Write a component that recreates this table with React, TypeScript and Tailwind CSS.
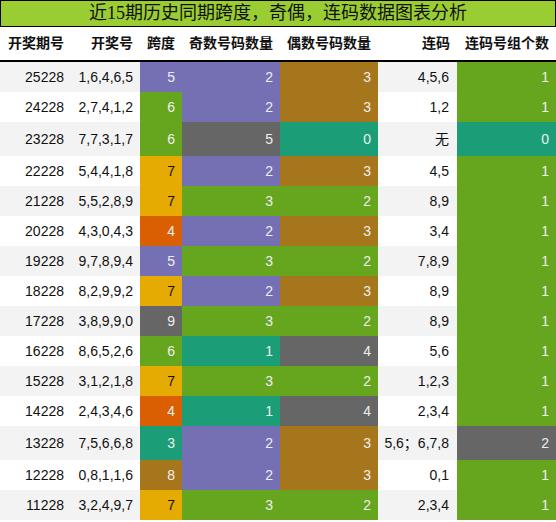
import React from "react";

// Dark2 palette used by the chart cells
const C: Record<string, string> = {
  purple: "bg-[#7570b3]",
  green: "bg-[#66a61e]",
  brown: "bg-[#a6761d]",
  teal: "bg-[#1b9e77]",
  gray: "bg-[#666666]",
  yellow: "bg-[#e6ab02]",
  orange: "bg-[#d95f02]",
};

type Cell = [number, string];

const rows: {
  qh: string;
  hm: string;
  kd: Cell;
  ji: Cell;
  ou: Cell;
  lm: string;
  gs: Cell;
  tall?: boolean;
}[] = [
  { qh: "25228", hm: "1,6,4,6,5", kd: [5, "purple"], ji: [2, "purple"], ou: [3, "brown"], lm: "4,5,6", gs: [1, "green"] },
  { qh: "24228", hm: "2,7,4,1,2", kd: [6, "green"], ji: [2, "purple"], ou: [3, "brown"], lm: "1,2", gs: [1, "green"] },
  { qh: "23228", hm: "7,7,3,1,7", kd: [6, "green"], ji: [5, "gray"], ou: [0, "teal"], lm: "无", gs: [0, "teal"], tall: true },
  { qh: "22228", hm: "5,4,4,1,8", kd: [7, "yellow"], ji: [2, "purple"], ou: [3, "brown"], lm: "4,5", gs: [1, "green"] },
  { qh: "21228", hm: "5,5,2,8,9", kd: [7, "yellow"], ji: [3, "green"], ou: [2, "green"], lm: "8,9", gs: [1, "green"] },
  { qh: "20228", hm: "4,3,0,4,3", kd: [4, "orange"], ji: [2, "purple"], ou: [3, "brown"], lm: "3,4", gs: [1, "green"] },
  { qh: "19228", hm: "9,7,8,9,4", kd: [5, "purple"], ji: [3, "green"], ou: [2, "green"], lm: "7,8,9", gs: [1, "green"] },
  { qh: "18228", hm: "8,2,9,9,2", kd: [7, "yellow"], ji: [2, "purple"], ou: [3, "brown"], lm: "8,9", gs: [1, "green"] },
  { qh: "17228", hm: "3,8,9,9,0", kd: [9, "gray"], ji: [3, "green"], ou: [2, "green"], lm: "8,9", gs: [1, "green"] },
  { qh: "16228", hm: "8,6,5,2,6", kd: [6, "green"], ji: [1, "teal"], ou: [4, "gray"], lm: "5,6", gs: [1, "green"] },
  { qh: "15228", hm: "3,1,2,1,8", kd: [7, "yellow"], ji: [3, "green"], ou: [2, "green"], lm: "1,2,3", gs: [1, "green"] },
  { qh: "14228", hm: "2,4,3,4,6", kd: [4, "orange"], ji: [1, "teal"], ou: [4, "gray"], lm: "2,3,4", gs: [1, "green"] },
  { qh: "13228", hm: "7,5,6,6,8", kd: [3, "teal"], ji: [2, "purple"], ou: [3, "brown"], lm: "5,6；6,7,8", gs: [2, "gray"], tall: true },
  { qh: "12228", hm: "0,8,1,1,6", kd: [8, "brown"], ji: [2, "purple"], ou: [3, "brown"], lm: "0,1", gs: [1, "green"] },
  { qh: "11228", hm: "3,2,4,9,7", kd: [7, "yellow"], ji: [3, "green"], ou: [2, "green"], lm: "2,3,4", gs: [1, "green"] },
];

const cols = "grid grid-cols-[71px_69px_42px_98px_98px_79px_99px]";
const headers = ["开奖期号", "开奖号", "跨度", "奇数号码数量", "偶数号码数量", "连码", "连码号组个数"];

function ColorCell({ cell }: { cell: Cell }) {
  const [v, c] = cell;
  const txt = c === "yellow" ? "text-[#111]" : "text-[#eeeeee]";
  return (
    <div className={`${C[c]} ${txt} flex items-center justify-end pr-[7px]`}>
      {v}
    </div>
  );
}

export default function App() {
  return (
    <div
      className="w-[556px] bg-white text-[14px] text-[#111]"
      style={{ fontFamily: '"Liberation Sans", Arial, "Noto Sans CJK SC", sans-serif' }}
    >
      <div
        className="h-[27px] border border-black bg-[#9acd32] flex items-center justify-center text-[18px] text-[#111]"
        style={{ fontFamily: '"Liberation Serif", "Noto Sans CJK SC", serif' }}
      >
        近15期历史同期跨度，奇偶，连码数据图表分析
      </div>
      <div className={`${cols} h-[35px] border-b-2 border-black font-bold`}>
        {headers.map((h) => (
          <div key={h} className="flex items-center justify-end pr-[7px]">
            {h}
          </div>
        ))}
      </div>
      {rows.map((r, i) => {
        const bg = i % 2 === 0 ? "bg-[#f3f3f3]" : "bg-white";
        return (
          <div key={r.qh} className={`${cols} ${r.tall ? "h-[34px]" : "h-[30px]"}`}>
            <div className={`${bg} flex items-center justify-end pr-[7px]`}>{r.qh}</div>
            <div className={`${bg} flex items-center justify-end pr-[7px]`}>{r.hm}</div>
            <ColorCell cell={r.kd} />
            <ColorCell cell={r.ji} />
            <ColorCell cell={r.ou} />
            <div className={`${bg} flex items-center justify-end pr-[8px] whitespace-nowrap`}>{r.lm}</div>
            <ColorCell cell={r.gs} />
          </div>
        );
      })}
    </div>
  );
}
